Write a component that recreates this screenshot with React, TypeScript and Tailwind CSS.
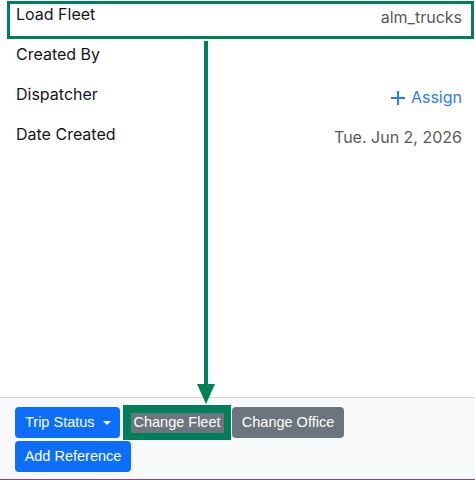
export default function App() {
  const rows = [
    { label: "Load Fleet", value: "alm_trucks" },
    { label: "Created By", value: "" },
    { label: "Dispatcher", value: "assign" },
    { label: "Date Created", value: "Tue. Jun 2, 2026" },
  ];

  return (
    <div className="relative w-[475px] h-[480px] bg-white overflow-hidden font-['Inter',sans-serif]">
      <div className="h-[397px] pl-4 pr-[13px]">
        {rows.map((row) => (
          <div key={row.label} className="flex justify-between h-10">
            <div className="pt-[2px] text-[16px] leading-6 text-[#141619]">{row.label}</div>
            {row.value === "assign" ? (
              <div className="mt-[5px] h-6 text-[16px] leading-6 text-[#2a7cf6] flex items-center gap-[6px]">
                <svg width="14" height="14" viewBox="0 0 14 14" className="relative top-[1px]">
                  <path d="M7 0v14M0 7h14" stroke="#2a7cf6" strokeWidth="2" />
                </svg>
                <span>Assign</span>
              </div>
            ) : (
              <div className="pt-[5px] text-[16px] leading-6 text-[#595959]">{row.value}</div>
            )}
          </div>
        ))}
      </div>

      <div className="h-[83px] bg-[#f8f9fa] border-t border-[#d3d3d3] border-b border-b-[#b33a5e] pl-[15px] pt-[9px] font-['Liberation_Sans',Arial,sans-serif] text-[14.5px] text-white">
        <div className="flex flex-wrap gap-y-[3px] w-[340px]">
          <button className="h-[31px] w-[105px] rounded bg-[#0d6efd] pl-[10px] flex items-center">
            <span>Trip Status</span>
            <span className="ml-[8px] w-0 h-0 border-l-4 border-r-4 border-t-4 border-l-transparent border-r-transparent border-t-white" />
          </button>
          <div className="ml-[3px] -my-[2px] h-[35px] w-[108px] bg-[#00805a] flex items-center justify-center">
            <span className="bg-[#6c757d] h-[20px] w-[93px] flex items-center justify-center">Change Fleet</span>
          </div>
          <button className="ml-[1px] h-[31px] w-[112px] rounded bg-[#6c757d] flex items-center justify-center">
            Change Office
          </button>
          <button className="h-[31px] w-[116px] rounded bg-[#0d6efd] flex items-center justify-center">
            Add Reference
          </button>
        </div>
      </div>

      {/* annotation overlay */}
      <div className="absolute left-[7px] top-[1px] w-[467px] h-[38px] border-[3px] border-[#00805a] pointer-events-none" />
      <div className="absolute left-[204px] top-[41px] w-[4px] h-[345px] bg-[#00805a]" />
      <svg className="absolute left-[197px] top-[384px]" width="18" height="20" viewBox="0 0 18 20">
        <polygon points="0,0 18,0 9,20" fill="#00805a" />
      </svg>
    </div>
  );
}
